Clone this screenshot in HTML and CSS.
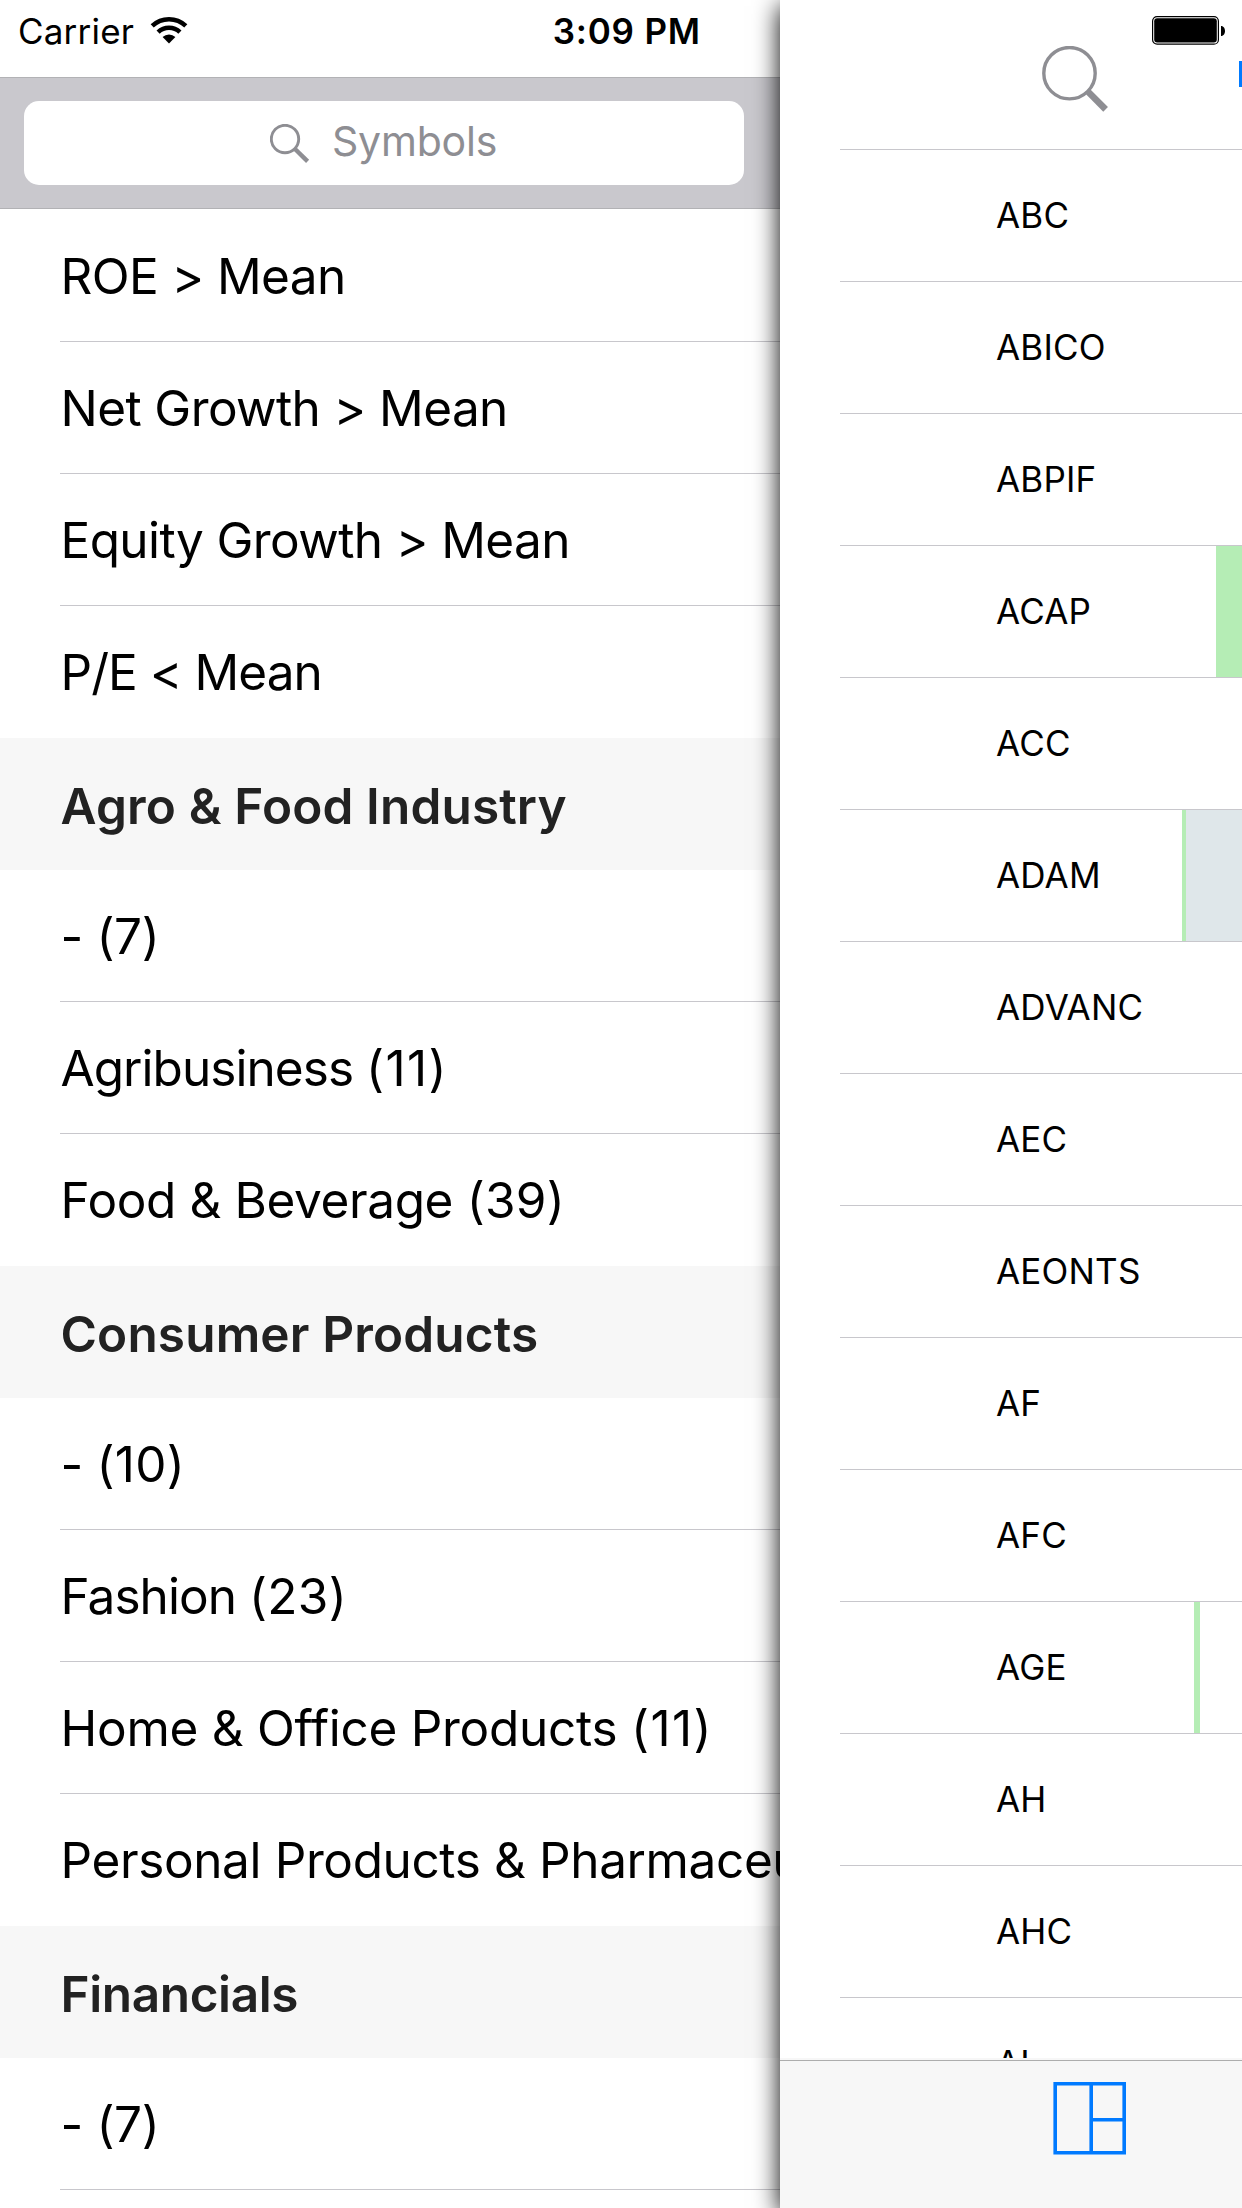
FILE: index.html
```html
<!DOCTYPE html>
<html lang="en">
<head>
<meta charset="utf-8">
<title>Symbols</title>
<link rel="stylesheet" href="styles.css">
</head>
<body>
<div class="screen">
  <aside class="menu">
    <header class="status">
      <span class="carrier">Carrier</span>
      <svg class="wifi" width="38" height="28" viewBox="0 0 38 28">
        <path d="M2.2 9.8A24.6 24.6 0 0 1 35.8 9.8" fill="none" stroke="#000" stroke-width="4.5"/>
        <path d="M8.1 16.1A15.9 15.9 0 0 1 29.9 16.1" fill="none" stroke="#000" stroke-width="4.6"/>
        <path d="M19 27.5L12.6 21A9.3 9.3 0 0 1 25.4 21Z"/>
      </svg>
      <span class="clock">3:09 PM</span>
    </header>
    <div class="search-bar">
      <div class="field">
        <svg class="glass" width="40" height="40" viewBox="0 0 40 40" fill="none" stroke="#8e8e93">
          <circle cx="15" cy="15" r="13.7" stroke-width="2.9"/>
          <path d="M24.5 24.5L37.6 37.4" stroke-width="4.4"/>
        </svg>
        <span>Symbols</span>
      </div>
    </div>
    <ul class="rows">
      <li class="snug">ROE &gt; Mean</li>
      <li class="snug">Net Growth &gt; Mean</li>
      <li class="snug">Equity Growth &gt; Mean</li>
      <li class="tight">P/E &lt; Mean</li>
    </ul>
    <h2>Agro &amp; Food Industry</h2>
    <ul class="rows">
      <li class="close">- (7)</li>
      <li class="tight">Agribusiness <span class="ones">(11)</span></li>
      <li class="close">Food &amp; Beverage <span class="count">(39)</span></li>
    </ul>
    <h2>Consumer Products</h2>
    <ul class="rows">
      <li class="close">- <span class="count">(10)</span></li>
      <li class="tight">Fashion <span class="count">(23)</span></li>
      <li class="normal">Home &amp; Office Products <span class="ones">(11)</span></li>
      <li class="close">Personal Products &amp; Pharmaceuticals</li>
    </ul>
    <h2 class="close">Financials</h2>
    <ul class="rows">
      <li class="close">- (7)</li>
      <li></li>
    </ul>
  </aside>

  <main class="panel">
    <header class="topbar">
      <svg class="search" width="66" height="66" viewBox="0 0 66 66" fill="none" stroke="#8e8e93">
        <circle cx="27.5" cy="27.2" r="25.7" stroke-width="3.4"/>
        <path d="M45.6 45.2L63.6 63.4" stroke-width="6.6"/>
      </svg>
      <svg class="battery" width="74" height="30" viewBox="0 0 74 30">
        <rect x=".6" y=".6" width="65.8" height="27.6" rx="4.5" fill="none" stroke="#000" stroke-width="1.2"/>
        <rect x="2.2" y="2.2" width="62.6" height="24.4" rx="3"/>
        <path d="M69 10c5.3 0 5.3 10 0 10z"/>
      </svg>
      <i class="action"></i>
    </header>
    <ul class="symbols">
      <li>ABC</li>
      <li>ABICO</li>
      <li>ABPIF</li>
      <li>ACAP<i class="bar wide"></i></li>
      <li>ACC</li>
      <li>ADAM<i class="bar mixed"></i></li>
      <li>ADVANC</li>
      <li>AEC</li>
      <li>AEONTS</li>
      <li>AF</li>
      <li>AFC</li>
      <li>AGE<i class="bar thin"></i></li>
      <li>AH</li>
      <li>AHC</li>
      <li>AI</li>
    </ul>
    <footer class="toolbar">
      <svg width="74" height="74" viewBox="0 0 74 74" fill="none" stroke="#007aff" stroke-width="3.6">
        <path d="M2.2 2.8H71.2V71.8H2.2ZM38.2 2.8V71.8M38.2 38.8H71.2"/>
      </svg>
    </footer>
  </main>
</div>
</body>
</html>
```
FILE: styles.css
```css
* { box-sizing: border-box; }

body {
  margin: 0;
  background: #fff;
  color: #000;
  font-family: Inter, "Liberation Sans", sans-serif;
}

ul { margin: 0; padding: 0; list-style: none; }

.screen {
  display: flex;
  width: 1242px;
  height: 2208px;
  overflow: hidden;
}

/* Side menu */
.menu {
  width: 780px;
  height: 2208px;
  overflow: hidden;
}

.status {
  display: flex;
  height: 77px;
  padding-left: 18px;
  font-size: 35px;
  line-height: 62px;
}
.carrier { width: 132px; letter-spacing: .2px; }
.wifi { margin: 16px 0 0 -.3px; }
.clock { margin-left: 365px; font-weight: 600; letter-spacing: .8px; }

.search-bar {
  height: 132px;
  padding: 23px 36px 23px 24px;
  background: #c9c8cd;
  border: solid #b2b2b5;
  border-width: 1px 0;
}
.field {
  display: flex;
  height: 84px;
  padding-left: 246px;
  border-radius: 15px;
  background: #fff;
  color: #8e8e93;
  font-size: 41px;
  line-height: 81px;
  letter-spacing: -.2px;
}
.glass { margin: 23px 22px 0 0; }

.rows { padding-left: 60px; }
.search-bar + .rows { padding-top: 1px; }
.rows li {
  height: 132px;
  border-bottom: 1px solid #c8c7cc;
  font-size: 49.5px;
  line-height: 132px;
  text-indent: .5px;
  white-space: nowrap;
}
.rows li:last-child { border-bottom: 0; }

.menu h2 {
  height: 132px;
  margin: 0;
  padding-left: 60.5px;
  background: #f7f7f7;
  color: #222;
  font-size: 49.5px;
  font-weight: 600;
  line-height: 136px;
  letter-spacing: .15px;
}

.rows .tight { letter-spacing: -.95px; }
.rows .snug { letter-spacing: -.6px; }
.rows .close, .menu h2.close { letter-spacing: -.38px; }
.rows .normal { letter-spacing: -.27px; }
.count { letter-spacing: .3px; }
.ones { letter-spacing: 1.4px; }

/* Foreground panel */
.panel {
  position: relative;
  display: flex;
  flex-direction: column;
  width: 462px;
  height: 2208px;
  background: #fff;
  box-shadow: 0 6px 24px #000;
}

.topbar {
  display: flex;
  height: 149px;
  padding-left: 262px;
}
.search { margin-top: 45.6px; }
.battery { margin: 16px 0 0 44px; }
.action { flex: none; width: 3px; height: 26px; margin: 61px 0 0 13px; background: #007aff; }

.symbols {
  flex: none;
  height: 1909px;
  margin-left: 60px;
  border-top: 1px solid #c8c7cc;
  overflow: hidden;
}
.symbols li {
  display: flex;
  justify-content: space-between;
  height: 132px;
  padding-left: 156px;
  border-bottom: 1px solid #c8c7cc;
  font-size: 35px;
  line-height: 131px;
  letter-spacing: .2px;
}
.bar { height: 131px; background: #b5edb5; }
.wide { width: 26px; }
.mixed { width: 60px; border-left: 4px solid #b5edb5; background: #dfe7ea; }
.thin { width: 6px; margin-right: 42px; }

.toolbar {
  height: 150px;
  padding: 20.5px 0 0 273px;
  border-top: 2px solid #f7f7f7;
  background: linear-gradient(#adadad 1px, #f7f7f7 1px);
}
.toolbar svg { display: block; }
```
